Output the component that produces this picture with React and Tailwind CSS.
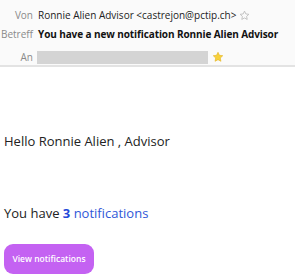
import React from "react";

export default function App() {
  return (
    <div className="w-[295px] h-[276px] bg-white overflow-hidden" style={{ fontFamily: '"Open Sans", "Noto Sans", sans-serif' }}>
      <div className="bg-[#fafafa] border-b-2 border-[#e3e3e3] h-[67px] pt-[8px] text-[10px] leading-[14px]">
        <div className="flex items-center h-[14px]">
          <div className="w-[34px] text-right text-[#8a8a8a] pr-[1px]">Von</div>
          <div className="ml-[4px] text-[#222] flex items-center whitespace-nowrap">
            Ronnie Alien Advisor &lt;castrejon@pctip.ch&gt;
            <svg width="11" height="11" viewBox="0 0 24 24" className="ml-[3px]" fill="none" stroke="#b8b8b8" strokeWidth="1.8" strokeLinejoin="round"><path d="M12 2.5l2.9 6.1 6.6.8-4.9 4.6 1.3 6.6L12 17.3l-5.9 3.3 1.3-6.6-4.9-4.6 6.6-.8z"/></svg>
          </div>
        </div>
        <div className="flex items-center h-[14px] mt-[5px]">
          <div className="w-[34px] text-right text-[#8a8a8a] pr-[1px]">Betreff</div>
          <div className="ml-[4px] text-[#111] font-bold whitespace-nowrap tracking-[-0.1px]">You have a new notification Ronnie Alien Advisor</div>
        </div>
        <div className="flex items-center h-[14px] mt-[9px]">
          <div className="w-[34px] text-right text-[#8a8a8a] pr-[1px]">An</div>
          <div className="ml-[3px] w-[171px] h-[13px] bg-[#d4d4d4]" />
          <svg width="12" height="12" viewBox="0 0 24 24" className="ml-[4px]" fill="#f7d13b" stroke="#e2b21e" strokeWidth="1.2" strokeLinejoin="round"><path d="M12 2.5l2.9 6.1 6.6.8-4.9 4.6 1.3 6.6L12 17.3l-5.9 3.3 1.3-6.6-4.9-4.6 6.6-.8z"/></svg>
        </div>
      </div>
      <div className="px-[4px]">
        <div className="mt-[65px] text-[13px] leading-[18px] text-[#222]">Hello Ronnie Alien , Advisor</div>
        <div className="mt-[54px] text-[13px] leading-[18px] text-[#222]">
          You have <span className="font-bold text-[#2348d8]">3</span> <span className="text-[#2f57d8]">notifications</span>
        </div>
        <div className="mt-[22px] inline-flex items-center justify-center w-[90px] h-[30px] rounded-[9px] bg-[#c462f2] text-white text-[8.5px] font-semibold">View notifications</div>
      </div>
    </div>
  );
}
